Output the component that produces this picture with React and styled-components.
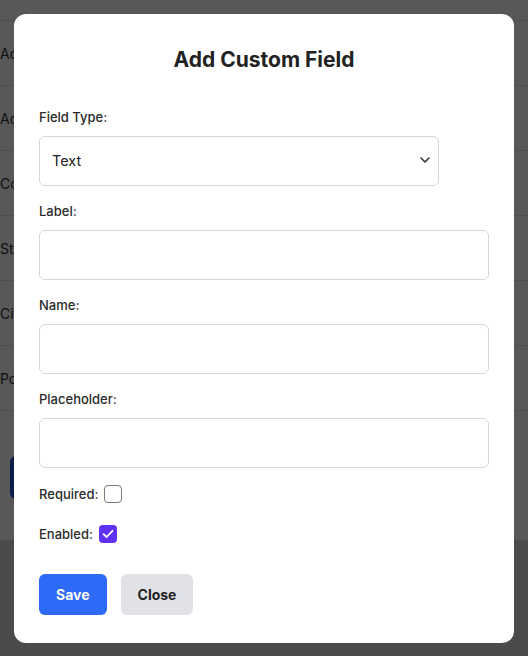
import styled, { createGlobalStyle } from "styled-components";

const GlobalStyle = createGlobalStyle`
  * { box-sizing: border-box; }
  html, body {
    margin: 0;
    padding: 0;
    background: #d8d8d8;
    font-family: Inter, "Noto Sans", "Liberation Sans", sans-serif;
    color: #222;
  }
`;

const Page = styled.div`
  background: #ffffff;
  height: 540px;
  overflow: hidden;
`;

const TopStrip = styled.div`
  height: 21px;
  border-bottom: 1px solid #e6e6e6;
`;

const Row = styled.div`
  height: 65px;
  display: flex;
  align-items: center;
  border-bottom: 1px solid #e6e6e6;
  font-size: 14px;
  color: #333;
`;

const PageButton = styled.button`
  margin: 45px 0 0 10px;
  width: 120px;
  height: 43px;
  border: none;
  border-radius: 6px;
  background: #2356d6;
`;

const Overlay = styled.div`
  position: fixed;
  inset: 0;
  background: rgba(0, 0, 0, 0.655);
  display: flex;
  align-items: center;
  justify-content: center;
`;

const Modal = styled.div`
  width: 500px;
  background: #ffffff;
  border-radius: 12px;
  padding: 25px 25px 28px;
`;

const Title = styled.h2`
  margin: 8px 0 36px;
  font-size: 21px;
  line-height: 26px;
  font-weight: 700;
  text-align: center;
  color: #222;
`;

const Group = styled.div`
  display: flex;
  flex-direction: column;
  align-items: flex-start;
  margin-bottom: 17px;

  &:last-of-type {
    margin-bottom: 16px;
  }
`;

const Label = styled.label`
  display: block;
  font-size: 13px;
  line-height: 16px;
  font-weight: 500;
  color: #2a2a2a;
  margin-bottom: 11px;
`;

const SelectWrap = styled.div`
  position: relative;
  width: 400px;
`;

const Select = styled.select`
  appearance: none;
  width: 100%;
  height: 50px;
  padding: 0 36px 0 12px;
  border: 1px solid #d6d6d6;
  border-radius: 6px;
  background: #fff;
  font-family: inherit;
  font-size: 14.5px;
  color: #222;
  outline: none;
`;

const Chevron = styled.svg`
  position: absolute;
  right: 9px;
  top: 20px;
  pointer-events: none;
`;

const Input = styled.input`
  width: 100%;
  height: 50px;
  padding: 0 12px;
  border: 1px solid #d6d6d6;
  border-radius: 6px;
  font-family: inherit;
  font-size: 14px;
  outline: none;
`;

const CheckRow = styled.label`
  display: flex;
  align-items: center;
  gap: 6px;
  height: 18px;
  margin-bottom: ${(p) => p.$gap}px;
`;

const CheckLabel = styled.span`
  font-size: 13px;
  font-weight: 500;
  color: #2a2a2a;
`;

const Box = styled.span`
  width: 18px;
  height: 18px;
  border-radius: 4px;
  display: flex;
  align-items: center;
  justify-content: center;
  border: ${(p) => (p.$checked ? "none" : "1.5px solid #7a7a7a")};
  background: ${(p) => (p.$checked ? "#5f31f4" : "#fff")};
`;

const Actions = styled.div`
  display: flex;
  gap: 14px;
`;

const Button = styled.button`
  height: 41px;
  padding: 0 17px;
  border: none;
  border-radius: 6px;
  font-family: inherit;
  font-size: 14px;
  font-weight: 700;
  background: ${(p) => (p.$primary ? "#2d6af6" : "#e1e2e7")};
  color: ${(p) => (p.$primary ? "#ffffff" : "#222")};
  cursor: pointer;
`;

function Checkbox({ label, checked, gap }) {
  return (
    <CheckRow $gap={gap}>
      <CheckLabel>{label}</CheckLabel>
      <Box $checked={checked}>
        {checked && (
          <svg width="12" height="10" viewBox="0 0 12 10">
            <path
              d="M1.5 5.2 L4.6 8 L10.5 1.8"
              fill="none"
              stroke="#fff"
              strokeWidth="1.8"
              strokeLinecap="round"
              strokeLinejoin="round"
            />
          </svg>
        )}
      </Box>
    </CheckRow>
  );
}

export default function App() {
  const rows = ["Address", "Address 2", "Country", "State", "City", "Postal Code"];
  return (
    <>
      <GlobalStyle />
      <Page>
        <TopStrip />
        {rows.map((r) => (
          <Row key={r}>{r}</Row>
        ))}
        <PageButton />
      </Page>

      <Overlay>
        <Modal>
          <Title>Add Custom Field</Title>

          <Group>
            <Label>Field Type:</Label>
            <SelectWrap>
              <Select defaultValue="text">
                <option value="text">Text</option>
              </Select>
              <Chevron width="10" height="8" viewBox="0 0 10 8">
                <path
                  d="M1 2 L5 6 L9 2"
                  fill="none"
                  stroke="#333"
                  strokeWidth="1.6"
                  strokeLinecap="round"
                  strokeLinejoin="round"
                />
              </Chevron>
            </SelectWrap>
          </Group>

          <Group>
            <Label>Label:</Label>
            <Input />
          </Group>

          <Group>
            <Label>Name:</Label>
            <Input />
          </Group>

          <Group>
            <Label>Placeholder:</Label>
            <Input />
          </Group>

          <Checkbox label="Required:" gap={22} />
          <Checkbox label="Enabled:" checked gap={31} />

          <Actions>
            <Button $primary>Save</Button>
            <Button>Close</Button>
          </Actions>
        </Modal>
      </Overlay>
    </>
  );
}
